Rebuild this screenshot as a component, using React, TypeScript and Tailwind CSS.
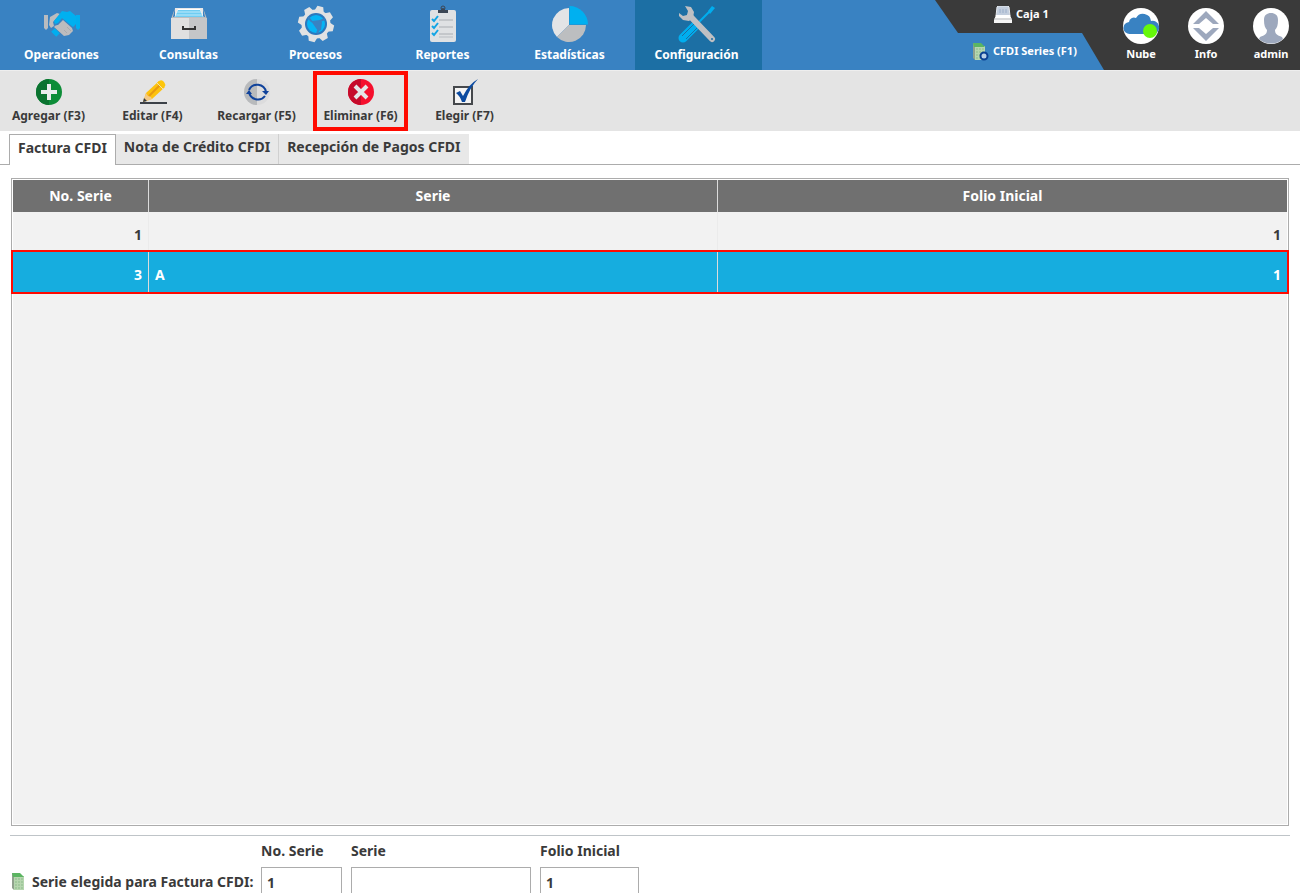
import { useState } from 'react';
import type { ReactNode } from 'react';

interface SerieRow {
  id: number;
  serie: string;
  folio: number;
}

const rows: SerieRow[] = [
  { id: 1, serie: '', folio: 1 },
  { id: 3, serie: 'A', folio: 1 },
];

const tabs = ['Factura CFDI', 'Nota de Crédito CFDI', 'Recepción de Pagos CFDI'];

/* Main menu icons */

function HandshakeIcon() {
  return (
    <svg width="38" height="38" viewBox="0 0 38 38">
      <path d="M1 10h4v13l-2 2-2-2z" fill="#b9bcc0" />
      <path d="M7 12l7-4 3 1-7 8 1 4-3 2-2-3z" fill="#bcbcbe" />
      <path d="M33 10h4v13l-2 2-2-2z" fill="#00aeef" />
      <path d="M11 16l8-10 5 1 3-1 6 5v8l-3 3-11-9-4 5-3 1z" fill="#00b0f0" />
      <path d="M15 20l5-5 9 8 1 3-4 4-5 1-10-9z" fill="#bcbcbe" />
      <path d="M11 21l4-1 5 8" fill="#bcbcbe" />
      <path d="M10 25l5 5" stroke="#00aeef" strokeWidth="5" />
      <path d="M21 25l3 3M24 22l4 4" stroke="#a9abae" />
    </svg>
  );
}

function DrawerIcon() {
  return (
    <svg width="38" height="38" viewBox="0 0 38 38">
      <path d="M5 3h28v11H5z" fill="#e8e8e8" />
      <path d="M8 4h22l4 9H4z" fill="#fff" />
      <path d="M8 5h22l3 7H5z" fill="#6fcdf2" />
      <path d="M7 7h24M6 10h26" stroke="#bfeafa" />
      <path d="M5 3L1 14h36L33 3l2 9H3z" fill="#bcbec0" />
      <path d="M1 13h18v21H1z" fill="#e0e0e0" />
      <path d="M19 13h18v21H19z" fill="#c5c6c8" />
      <path d="M13 21v3h12v-3" fill="none" stroke="#333" strokeWidth="2" />
    </svg>
  );
}

function GearIcon() {
  return (
    <svg width="38" height="38" viewBox="0 0 38 38">
      <g fill="#e1e2e3">
        <circle cx="19" cy="19" r="14.500" />
        {[0, 45, 90, 135, 180, 225, 270, 315].map((a) => (
          <path key={a} d="M14 7l2-6h6l2 6z" transform={`rotate(${a + 14} 19 19)`} />
        ))}
      </g>
      <circle cx="19" cy="19" r="11" fill="#2b78bd" />
      <circle cx="19" cy="19" r="9" fill="#06b4f5" />
      <path d="M14 16l9-1 2 2-1 8-3 1z" fill="#3982c2" />
      <path d="M15 17l-4-5M23 16l5-2M22 24l-2 4" stroke="#3982c2" strokeWidth="2" />
    </svg>
  );
}

function ClipboardIcon() {
  return (
    <svg width="38" height="38" viewBox="0 0 38 38">
      <rect x="6" y="5" width="26" height="32" rx="2" fill="#dfe1e3" />
      <path d="M14 8V5h3a2 2 0 0 1 4 0h3v3z" fill="#3b4655" />
      <circle cx="19" cy="3" r="2" fill="none" stroke="#3b4655" />
      {[13, 20, 27].map((y) => (
        <g key={y}>
          <path d={`M8 ${y + 1}l2 2 4-5`} fill="none" stroke="#12a5e5" strokeWidth="2" />
          <path d={`M15 ${y + 2}h14`} stroke="#a9adb2" />
        </g>
      ))}
      <path d="M15 32h14" stroke="#b9bdc2" />
    </svg>
  );
}

function PieIcon() {
  return (
    <svg width="38" height="38" viewBox="0 0 38 38">
      <path d="M18 20V3A17 17 0 0 0 6 32z" fill="#e3e4e6" />
      <path d="M18 20L6 32a17 17 0 0 0 29-12z" fill="#bcbec0" />
      <path d="M18.500 19.500V1A18.500 18.500 0 0 1 37 19.500z" fill="#00b0f0" />
    </svg>
  );
}

function ToolsIcon() {
  return (
    <svg width="38" height="38" viewBox="0 0 38 38">
      <path d="M18 20L33 5" stroke="#00aeef" strokeWidth="2" />
      <path d="M30 6l4-5 3 2-5 6z" fill="#00aeef" />
      <path d="M17 21L5 33" stroke="#00aeef" strokeWidth="9" strokeLinecap="round" />
      <path d="M16 19L4 31M20 22L8 34" stroke="#1c6fa4" />
      <path d="M12 11L34 34" stroke="#bfc0c3" strokeWidth="6" strokeLinecap="round" />
      <path d="M7 1l6 1 3 5-1 6-4 3-6-1-4-4V8l4 3 4-1 1-4z" fill="#bfc0c3" />
      <circle cx="34" cy="34" r="1" fill="#1c6fa4" />
    </svg>
  );
}

/* Toolbar icons */

function AddIcon() {
  return (
    <svg width="28" height="28" viewBox="0 0 28 28">
      <circle cx="14" cy="14" r="13" fill="#0d8d38" />
      <path d="M14 1a13 13 0 0 0 0 26z" fill="#0b7330" />
      <path d="M14 6v16M6 14h16" stroke="#e9ecec" strokeWidth="4" />
    </svg>
  );
}

function EditIcon() {
  return (
    <svg width="28" height="28" viewBox="0 0 28 28">
      <path d="M1 25h27" stroke="#3c4148" strokeWidth="2" />
      <path d="M4 24l3-9L20 3l6 6-13 12z" fill="#fdc20e" />
      <path d="M10 18L22 6" stroke="#e79a12" strokeWidth="2" />
      <path d="M18 5l2-2q3-2 5 1t1 4l-2 2z" fill="#fdc60b" />
      <path d="M18 5l6 6" stroke="#f4e3ae" />
      <path d="M4 24l3-9 2 3 3 1 1 2z" fill="#f3c987" />
      <path d="M4 24l1-4 3 3z" fill="#343a42" />
    </svg>
  );
}

function ReloadIcon() {
  return (
    <svg width="28" height="28" viewBox="0 0 28 28">
      <circle cx="14" cy="14" r="13" fill="#dcdcdd" />
      <path d="M14 1a13 13 0 0 0 0 26z" fill="#b8babc" />
      <path d="M6 12a9 9 0 0 1 17 2M22 18a9 9 0 0 1-16-4" fill="none" stroke="#0f429b" strokeWidth="2" />
      <path d="M19 13h7l-3 4zM3 16h6l-3-4z" fill="#0f429b" />
    </svg>
  );
}

function DeleteIcon() {
  return (
    <svg width="28" height="28" viewBox="0 0 28 28">
      <circle cx="14" cy="14" r="13" fill="#f50f2d" />
      <path d="M14 1a13 13 0 0 0 0 26z" fill="#c50b2b" />
      <path d="M8 8l12 12M20 8L8 20" stroke="#e4e6e8" strokeWidth="4" />
    </svg>
  );
}

function ChooseIcon() {
  return (
    <svg width="28" height="28" viewBox="0 0 28 28">
      <rect x="3" y="9" width="18" height="17" fill="#f4f4f4" stroke="#45484c" strokeWidth="2" />
      <path d="M5 15l4-2 3 5Q18 6 27 1 19 9 14 24h-3Q9 18 5 15z" fill="#0b4aa0" />
    </svg>
  );
}

/* Status icons */

function RegisterIcon() {
  return (
    <svg width="18" height="18" viewBox="0 0 18 18">
      <path d="M4 0h10l1 1 1 9H2l1-9z" fill="#c3cede" stroke="#e4e8ee" />
      <path d="M5 4h8M5 6h8" stroke="#9dafc9" strokeDasharray="2 1" />
      <path d="M2 9h14l2 5H0z" fill="#fff" />
      <path d="M0 14h18v3H0z" fill="#f6f6f6" />
      <path d="M0 13h18" stroke="#b0b2b5" />
    </svg>
  );
}

function InvoiceIcon({ badge = false }: { badge?: boolean }) {
  return (
    <svg width="18" height="18" viewBox="0 0 18 18" className="shrink-0">
      <path d="M2 0h7l1 4h4v13H4L2 15z" fill="#8fa08d" />
      <path d="M4 3h10v14H4z" fill="#b6d6af" />
      <path d="M2 0h8l4 4H3z" fill="#5bb562" />
      <path d="M6 5v11M9 5v11M12 5v11" stroke="#8dbb8b" strokeDasharray="2 1" />
      {badge && <circle cx="13" cy="13" r="3.500" fill="#b9cfe6" stroke="#0b3f91" strokeWidth="2" />}
    </svg>
  );
}

function CloudIcon() {
  return (
    <svg width="38" height="38" viewBox="0 0 38 38">
      <circle cx="19" cy="19" r="18" fill="#fff" />
      <path d="M8 27a6 6 0 0 1-1-12 5 5 0 0 1 7-4 8 8 0 0 1 15 3 6 6 0 0 1 3 13z" fill="#3982c2" />
      <circle cx="28" cy="24" r="7" fill="#66f80a" />
    </svg>
  );
}

function InfoIcon() {
  return (
    <svg width="38" height="38" viewBox="0 0 38 38">
      <circle cx="19" cy="19" r="18" fill="#fff" />
      <path d="M6 17L19 4l13 13h-6l-7-6-7 6z" fill="#9da8bd" />
      <path d="M6 21h6l7 6 7-6h6L19 34z" fill="#9da8bd" />
    </svg>
  );
}

function UserIcon() {
  return (
    <svg width="38" height="38" viewBox="0 0 38 38">
      <circle cx="19" cy="19" r="18" fill="#fff" />
      <path
        d="M12 13c0-5 3-7 7-7s7 2 7 7c0 5-1 8-3 10 0 4 2 5 7 7l1 2a18 18 0 0 1-24 0l1-2c5-2 7-3 7-7-2-2-3-5-3-10z"
        fill="#9da8bd"
      />
    </svg>
  );
}

const menu: { label: string; icon: ReactNode }[] = [
  { label: 'Operaciones', icon: <HandshakeIcon /> },
  { label: 'Consultas', icon: <DrawerIcon /> },
  { label: 'Procesos', icon: <GearIcon /> },
  { label: 'Reportes', icon: <ClipboardIcon /> },
  { label: 'Estadísticas', icon: <PieIcon /> },
  { label: 'Configuración', icon: <ToolsIcon /> },
];

const actions: { label: string; icon: ReactNode; marked?: boolean }[] = [
  { label: 'Agregar (F3)', icon: <AddIcon /> },
  { label: 'Editar (F4)', icon: <EditIcon /> },
  { label: 'Recargar (F5)', icon: <ReloadIcon /> },
  { label: 'Eliminar (F6)', icon: <DeleteIcon />, marked: true },
  { label: 'Elegir (F7)', icon: <ChooseIcon /> },
];

const account: { label: string; icon: ReactNode }[] = [
  { label: 'Nube', icon: <CloudIcon /> },
  { label: 'Info', icon: <InfoIcon /> },
  { label: 'admin', icon: <UserIcon /> },
];

function Header() {
  return (
    <header className="flex h-[70px] shrink-0 bg-[#3982c2] text-white font-bold">
      <nav className="flex">
        {menu.map((item) => (
          <button
            key={item.label}
            className={`w-[127px] flex flex-col items-center gap-1 pt-[5px] pr-1 text-xs leading-4 ${
              item.label === 'Configuración' ? 'bg-[#1c6fa4]' : ''
            }`}
          >
            {item.icon}
            {item.label}
          </button>
        ))}
      </nav>

      <div className="ml-auto w-[169px] flex flex-col text-[11px]">
        <div className="h-[33px] flex items-center gap-1 pl-[59px] pb-1 bg-[#3a3a3a] [clip-path:polygon(0_0,100%_0,100%_100%,23px_100%)]">
          <RegisterIcon />
          Caja 1
        </div>
        <div className="flex-1 bg-linear-to-r from-transparent from-50% to-[#3a3a3a] to-50%">
          <button className="w-full h-full flex items-center gap-1 pl-9 bg-[#3982c2] whitespace-nowrap [clip-path:polygon(0_0,147px_0,169px_100%,0_100%)]">
            <InvoiceIcon badge />
            CFDI Series (F1)
          </button>
        </div>
      </div>

      <div className="flex gap-[27px] pl-[18px] pr-[10px] bg-[#3a3a3a]">
        {account.map((item) => (
          <button key={item.label} className="w-[38px] flex flex-col items-center gap-px pt-[7px] text-[11px] leading-4">
            {item.icon}
            {item.label}
          </button>
        ))}
      </div>
    </header>
  );
}

function Toolbar() {
  return (
    <div className="h-[61px] shrink-0 flex gap-[9px] pl-px border-t border-[#eeeeee] bg-[#e4e4e4]">
      {actions.map((action) => (
        <button
          key={action.label}
          className={`w-[95px] flex flex-col items-center gap-0.5 border-4 pt-[3px] text-xs leading-4 font-bold whitespace-nowrap ${
            action.marked ? 'border-[#ff0a00]' : 'border-transparent'
          }`}
        >
          {action.icon}
          {action.label}
        </button>
      ))}
    </div>
  );
}

function SerieTable({ selected, onSelect }: { selected: number; onSelect: (id: number) => void }) {
  return (
    <table className="w-full table-fixed border-separate border-spacing-0 text-sm">
      <thead>
        <tr className="h-8 bg-[#707070] text-white">
          <th className="w-[136px] border-r border-[#dcdcdc]">No. Serie</th>
          <th className="border-r border-[#dcdcdc]">Serie</th>
          <th>Folio Inicial</th>
        </tr>
      </thead>
      <tbody className="font-bold">
        {rows.map((row) => (
          <tr
            key={row.id}
            onClick={() => onSelect(row.id)}
            className={`h-10 ${
              row.id === selected
                ? 'bg-[#16addf] text-white outline-2 outline-[#ff0a00] [&>td]:border-[#dcdcdc]'
                : '[&>td]:border-[#ebebeb]'
            }`}
          >
            <td className="border-r px-[6px] pt-[6px] text-right">{row.id}</td>
            <td className="border-r px-[6px] pt-[6px]">{row.serie}</td>
            <td className="px-[6px] pt-[6px] text-right">{row.folio}</td>
          </tr>
        ))}
      </tbody>
    </table>
  );
}

export default function App() {
  const [tab, setTab] = useState(tabs[0]);
  const [selected, setSelected] = useState(3);

  return (
    <div className="h-screen flex flex-col overflow-hidden bg-white text-[#3a3a3a] font-['Noto_Sans','Open_Sans',sans-serif]">
      <Header />
      <Toolbar />

      <div className="h-[34px] shrink-0 flex items-end pl-[9px] pt-[3px] border-b border-[#acacac]">
        {tabs.map((name, i) => (
          <button
            key={name}
            onClick={() => setTab(name)}
            className={`px-2 pb-1 text-sm font-bold leading-5 ${
              name === tab
                ? 'h-[31px] -mb-px bg-white border border-b-0 border-[#acacac]'
                : `h-[30px] bg-[#e8e8e8] ${i > 1 ? 'border-l border-[#d0d0d0]' : ''}`
            }`}
          >
            {name}
          </button>
        ))}
      </div>

      <main className="flex-1 min-h-0 px-[11px] pt-[13px] pb-[9px]">
        <div className="h-full border border-[#acacac] bg-white p-px">
          <div className="h-full bg-[#f2f2f2]">
            <SerieTable selected={selected} onSelect={setSelected} />
          </div>
        </div>
      </main>

      <footer className="h-[58px] shrink-0 overflow-hidden mx-[10px] border-t border-[#bfc4c8] flex gap-[9px] text-sm font-bold">
        <div className="w-[242px] flex items-center gap-1 pt-9 self-start leading-5 whitespace-nowrap">
          <InvoiceIcon />
          Serie elegida para Factura CFDI:
        </div>
        <label className="w-[81px] pt-[5px]">
          <span className="block leading-5">No. Serie</span>
          <input defaultValue="1" className="mt-[6px] w-full h-[30px] border border-[#acacac] px-[5px]" />
        </label>
        <label className="w-[180px] pt-[5px]">
          <span className="block leading-5">Serie</span>
          <input defaultValue="" className="mt-[6px] w-full h-[30px] border border-[#acacac] px-[5px]" />
        </label>
        <label className="w-[99px] pt-[5px]">
          <span className="block leading-5">Folio Inicial</span>
          <input defaultValue="1" className="mt-[6px] w-full h-[30px] border border-[#acacac] px-[5px]" />
        </label>
      </footer>
    </div>
  );
}
